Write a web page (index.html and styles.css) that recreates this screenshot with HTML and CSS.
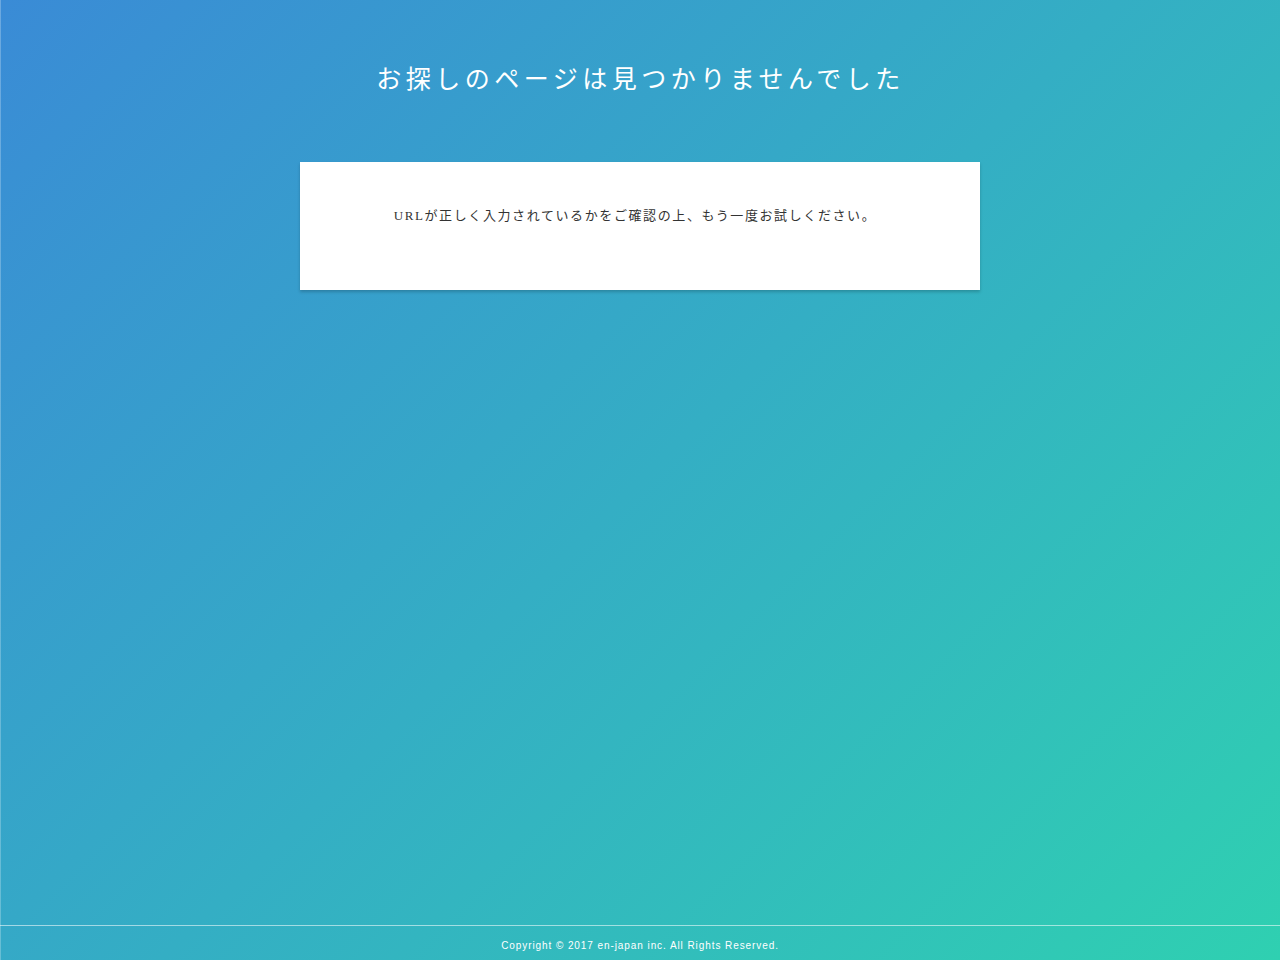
FILE: index.html
```html
<!DOCTYPE html>
<html lang="ja">
<head>
<meta charset="utf-8">
<title>お探しのページは見つかりませんでした</title>
<link rel="stylesheet" href="styles.css">
</head>
<body>
<div class="page">
  <main class="main">
    <h1 class="title">お探しのページは見つかりませんでした</h1>
    <div class="card">
      <p class="message">URLが正しく入力されているかをご確認の上、もう一度お試しください。</p>
    </div>
  </main>
  <footer class="footer">
    <p class="copy">Copyright © 2017 en-japan inc. All Rights Reserved.</p>
  </footer>
</div>
</body>
</html>
```

FILE: styles.css
```css
html, body {
  margin: 0;
  padding: 0;
  height: 100%;
}
body {
  background: linear-gradient(135deg, #3a8bd6 0%, #34aec4 50%, #2fd0b1 100%);
  font-family: "Noto Sans CJK JP", sans-serif;
}
.page {
  min-height: 960px;
  display: flex;
  flex-direction: column;
  box-shadow: inset 1px 0 0 rgba(255,255,255,0.25);
  box-sizing: border-box;
}
.main {
  flex: 1;
  display: flex;
  flex-direction: column;
  align-items: center;
  padding-top: 59px;
}
.title {
  margin: 0;
  padding-left: 1px;
  color: #fff;
  font-family: "Noto Sans CJK JP", sans-serif;
  font-weight: 400;
  font-size: 25px;
  line-height: 36px;
  letter-spacing: 4.5px;
}
.card {
  margin-top: 67px;
  width: 680px;
  height: 128px;
  background: #fff;
  box-shadow: 0 2px 3px rgba(0,0,0,0.2);
  display: flex;
  justify-content: center;
  box-sizing: border-box;
  padding: 44px 10px 0 0;
}
.message {
  margin: 0;
  color: #333;
  font-family: "Liberation Serif", "Noto Sans CJK JP", serif;
  font-size: 13px;
  line-height: 20px;
  letter-spacing: 1.6px;
}
.footer {
  border-top: 1px solid rgba(255,255,255,0.55);
  height: 34px;
  display: flex;
  justify-content: center;
  align-items: center;
}
.copy {
  margin: 0;
  padding-top: 4px;
  color: #fff;
  font-family: "Liberation Sans", sans-serif;
  font-size: 10px;
  letter-spacing: 0.92px;
}
```
